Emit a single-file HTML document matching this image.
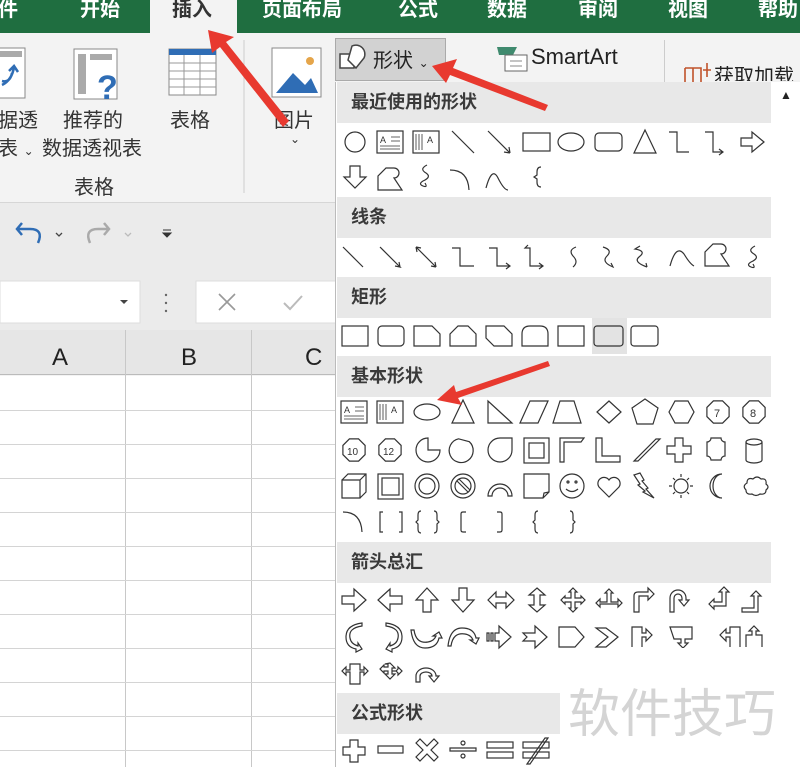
<!DOCTYPE html>
<html><head><meta charset="utf-8"><style>
*{margin:0;padding:0;box-sizing:border-box}
body{width:800px;height:767px;overflow:hidden;position:relative;background:#f3f3f3;font-family:"Liberation Sans","Noto Sans CJK SC",sans-serif}
.a{position:absolute;white-space:nowrap}
.tab{position:absolute;top:-7px;color:#fff;font-size:20px;font-weight:bold}
.rl{position:absolute;font-size:20px;color:#333;white-space:nowrap}
.hd{position:absolute;left:337px;width:434px;height:41px;background:#e8e8e8;font-size:18px;font-weight:bold;color:#3a3a3a;padding-left:14px;line-height:41px}
</style></head><body>
<div class="a" style="left:0;top:0;width:800px;height:33px;background:#1f6e40"></div>
<div class="a" style="left:150px;top:0;width:87px;height:34px;background:#f3f3f3"></div>
<div class="tab" style="left:-2px">件</div>
<div class="tab" style="left:80px">开始</div>
<div class="tab" style="left:172px;color:#333">插入</div>
<div class="tab" style="left:262px">页面布局</div>
<div class="tab" style="left:398px">公式</div>
<div class="tab" style="left:487px">数据</div>
<div class="tab" style="left:578px">审阅</div>
<div class="tab" style="left:668px">视图</div>
<div class="tab" style="left:758px">帮助</div>

<svg class="a" style="left:0;top:33px" width="340" height="170">
 <rect x="-2" y="15" width="27" height="50" fill="#fff" stroke="#888"/>
 <rect x="0" y="18" width="22" height="6" fill="#aaa"/>
 <path d="M2,52 q10,-5 12,-18 M9,38 l5,-5 l4,6 M2,48 q8,2 10,-8" stroke="#2f6db5" stroke-width="2.5" fill="none"/>
 <rect x="74" y="16" width="43" height="50" fill="#fff" stroke="#888"/>
 <rect x="78" y="21" width="8" height="40" fill="#aaa"/><rect x="90" y="21" width="22" height="6" fill="#aaa"/>
 <text x="97" y="66" font-size="34" font-weight="bold" fill="#2f6db5" font-family="Liberation Sans">?</text>
 <rect x="169" y="16" width="47" height="46" fill="#fff" stroke="#888"/>
 <rect x="169" y="16" width="47" height="6" fill="#2f6db5"/>
 <path d="M169,30H216M169,38H216M169,46H216M169,54H216M184,22V62M200,22V62" stroke="#999"/>
 <line x1="244" y1="7" x2="244" y2="160" stroke="#ccc"/>
 <rect x="272" y="15" width="49" height="49" fill="#fff" stroke="#888"/>
 <circle cx="310" cy="28" r="4" fill="#e5a54a"/>
 <path d="M276,60 L293,40 L305,52 L311,45 L318,60 Z" fill="#2f6db5"/>
</svg>
<div class="rl" style="left:-2px;top:104px">据透</div>
<div class="rl" style="left:-2px;top:132px">表 <span style="font-size:12px">⌄</span></div>
<div class="rl" style="left:63px;top:104px">推荐的</div>
<div class="rl" style="left:42px;top:132px">数据透视表</div>
<div class="rl" style="left:170px;top:104px">表格</div>
<div class="rl" style="left:74px;top:171px">表格</div>
<div class="rl" style="left:274px;top:104px">图片</div>
<div class="rl" style="left:290px;top:132px;font-size:12px">⌄</div>
<div class="a" style="left:0;top:202px;width:336px;height:1px;background:#d6d6d6"></div>

<div class="a" style="left:0;top:203px;width:336px;height:127px;background:#ebebeb"></div>
<svg class="a" style="left:0;top:203px" width="336" height="127">
 <path d="M38,40 q6,-14 -8,-14 h-12 M22,20 l-5,6 l5,6" stroke="#2f6db5" stroke-width="2.5" fill="none"/>
 <path d="M56,30 l3,3 l3,-3" stroke="#444" fill="none" stroke-width="1.3"/>
 <path d="M90,40 q-6,-14 8,-14 h10 M104,20 l5,6 l-5,6" stroke="#aaa" stroke-width="2.5" fill="none"/>
 <path d="M125,30 l3,3 l3,-3" stroke="#bbb" fill="none" stroke-width="1.3"/>
 <path d="M163,27 h8 M163,30 l4,4 l4,-4z" stroke="#333" fill="#333"/>
 <rect x="0" y="78" width="140" height="42" fill="#fff" stroke="#ddd"/>
 <path d="M120,97 l4,4 l4,-4z" fill="#444"/>
 <circle cx="166" cy="92" r="1.2" fill="#666"/><circle cx="166" cy="100" r="1.2" fill="#666"/><circle cx="166" cy="108" r="1.2" fill="#666"/>
 <rect x="196" y="78" width="142" height="42" fill="#fff" stroke="#ddd"/>
 <path d="M219,91 l16,16 M235,91 l-16,16" stroke="#999" stroke-width="1.6"/>
 <path d="M284,100 l6,6 l12,-13" stroke="#bbb" stroke-width="2" fill="none"/>
</svg>

<div class="a" style="left:0;top:330px;width:336px;height:45px;background:#e6e6e6;border-bottom:1px solid #bbb"></div>
<div class="a" style="left:52px;top:344px;font-size:24px;color:#222">A</div>
<div class="a" style="left:181px;top:344px;font-size:24px;color:#222">B</div>
<div class="a" style="left:305px;top:344px;font-size:24px;color:#222">C</div>
<svg class="a" style="left:0;top:330px" width="336" height="437">
 <rect x="0" y="46" width="336" height="391" fill="#fff"/>
 <path d="M125.5,0V437M251.5,0V437M335.5,0V437" stroke="#c8c8c8"/>
 <path d="M0,80.5H336M0,114.5H336M0,148.5H336M0,182.5H336M0,216.5H336M0,250.5H336M0,284.5H336M0,318.5H336M0,352.5H336M0,386.5H336M0,420.5H336" stroke="#d4d4d4"/>
</svg>

<div class="a" style="left:336px;top:33px;width:464px;height:50px;background:#f3f3f3"></div>
<div class="a" style="left:335px;top:38px;width:111px;height:43px;background:#d2d2d2;border:1px solid #aaa"></div>
<svg class="a" style="left:336px;top:40px" width="40" height="40"><path d="M4,14 h14 v14 h-14z" stroke="#444" fill="#fff" stroke-width="1.5"/><path d="M16,6 a9,9 0 0 1 12,12 l-8,10 l-8,-8 z" stroke="#444" fill="#fff" stroke-width="1.5"/></svg>
<div class="a" style="left:373px;top:44px;font-size:20px;color:#222">形状 <span style="font-size:12px">⌄</span></div>
<svg class="a" style="left:495px;top:45px" width="36" height="30"><path d="M2,2 h20 l-4,8 h-14z" fill="#3f8a6e"/><rect x="10" y="10" width="22" height="16" fill="#fff" stroke="#666"/><path d="M15,16h12M15,21h12" stroke="#888"/></svg>
<div class="a" style="left:531px;top:44px;font-size:22px;color:#222">SmartArt</div>
<div class="a" style="left:664px;top:40px;width:1px;height:42px;background:#ccc"></div>
<svg class="a" style="left:683px;top:60px" width="30" height="22"><path d="M2,8h16v14M2,8v14M10,8v14M20,10h8M24,3v14" stroke="#c0522b" fill="none" stroke-width="1.6"/></svg>
<div class="a" style="left:714px;top:60px;font-size:20px;color:#222;height:21px;overflow:hidden">获取加载</div>

<div class="a" style="left:335px;top:82px;width:465px;height:685px;background:#fff;border-left:1px solid #bbb"></div>
<div class="a" style="left:780px;top:88px;font-size:12px;color:#222">▲</div>
<div class="hd" style="top:82px">最近使用的形状</div>
<div class="hd" style="top:197px">线条</div>
<div class="hd" style="top:277px">矩形</div>
<div class="hd" style="top:356px">基本形状</div>
<div class="hd" style="top:542px">箭头总汇</div>
<div class="hd" style="top:693px;width:223px">公式形状</div>
<div class="a" style="left:592px;top:318px;width:35px;height:36px;background:#e3e3e3"></div>

<svg class="a" style="left:0;top:0" width="800" height="767" fill="none" stroke="#333" stroke-width="1.2" font-family="Liberation Sans">
<defs>
 <g id="tb"><rect x="-13" y="-11" width="26" height="22"/><text x="-10" y="1" font-size="9" fill="#333" stroke="none">A</text><path d="M1,-5h9M1,-1h9M-10,4h20M-10,7h20" stroke-width=".8"/></g>
 <g id="vtb"><rect x="-13" y="-11" width="26" height="22"/><path d="M-10,-8v16M-7,-8v16M-4,-8v16" stroke-width=".8"/><text x="1" y="1" font-size="9" fill="#333" stroke="none">A</text></g>
 <polygon id="oct" points="4.6,-11.1 11.1,-4.6 11.1,4.6 4.6,11.1 -4.6,11.1 -11.1,4.6 -11.1,-4.6 -4.6,-11.1"/>
</defs>
<g transform="translate(355,142)"><circle r="10"/></g>
<use href="#tb" x="390" y="142"/>
<use href="#vtb" x="426" y="142"/>
<path d="M452,131 l22,22"/>
<path d="M488,131 l22,22 M510,153 l-6,-1 M510,153 l-1,-6"/>
<rect x="523" y="133" width="27" height="18"/>
<ellipse cx="571" cy="142" rx="13" ry="9"/>
<rect x="595" y="133" width="27" height="18" rx="4"/>
<path d="M645,130 l-11,23 h22z"/>
<path d="M669,132 h8 v20 h12"/>
<path d="M705,132 h8 v20 h10 M719,149 l4,3 l-4,3"/>
<path d="M741,138 h11 v-6 l12,10 l-12,10 v-6 h-11z"/>
<path d="M350,166 h10 v11 h6 l-11,11 l-11,-11 h6z"/>
<path d="M378,190 v-14 l8,-8 h8 a5,5 0 0 1 0,10 l8,12z"/>
<path d="M427,165 q-8,4 -1,8 q6,4 -3,8 q-5,3 0,5 q5,2 2,-3"/>
<path d="M450,170 q18,0 19,20"/>
<path d="M486,188 q6,-22 12,-10 q6,12 10,12"/>
<path d="M541,167 q-4,0 -4,5 v3 l-3,2 l3,2 v3 q0,5 4,5"/>
<path d="M343,247 l20,20"/>
<path d="M380,247 l20,20 l-5,-1 M400,267 l-1,-5"/>
<path d="M416,247 l20,20 M416,247 l5,1 M416,247 l1,5 M436,267 l-5,-1 M436,267 l-1,-5"/>
<path d="M452,248 h8 v18 h14"/>
<path d="M489,248 h8 v18 h12 M506,263 l4,3 l-4,3"/>
<path d="M529,248 h-4 l3,-3 M525,248 h5 v18 h12 M539,263 l4,3 l-4,3"/>
<path d="M576,247 q-8,3 -3,9 q6,6 0,11"/>
<path d="M603,247 q10,3 4,9 q-6,6 6,11 l-2,-4"/>
<path d="M640,246 l-5,3 q12,2 4,8 q-6,5 8,10 M647,267 l-1,-4"/>
<path d="M670,266 q6,-22 14,-12 q6,10 10,12"/>
<path d="M705,266 v-14 l8,-8 h8 a5,5 0 0 1 0,10 l8,12z"/>
<path d="M755,246 q-8,4 -1,8 q6,4 -3,8 q-5,3 0,5 q5,2 2,-3"/>
<rect x="342" y="326" width="26" height="20"/>
<rect x="378" y="326" width="26" height="20" rx="4"/>
<path d="M414,326 h18 l8,8 v12 h-26z"/>
<path d="M458,326 h10 l8,8 v12 h-26 v-12z"/>
<path d="M486,326 h18 l8,8 v12 h-18 l-8,-8z"/>
<path d="M522,346 v-12 q0,-8 8,-8 h10 q8,0 8,8 v12z"/>
<path d="M558,326 h26 v20 h-26z"/>
<rect x="594" y="326" width="29" height="20" rx="3"/>
<rect x="631" y="326" width="27" height="20" rx="3"/>
<use href="#tb" x="354" y="412"/>
<use href="#vtb" x="390" y="412"/>
<ellipse cx="427" cy="412" rx="13" ry="8"/>
<path d="M463,400 l-11,23 h22z"/>
<path d="M488,401 v22 h24z"/>
<path d="M530,401 h18 l-10,22 h-18z"/>
<path d="M560,401 h14 l7,22 h-28z"/>
<path d="M609,401 l12,11 l-12,11 l-12,-11z"/>
<polygon points="645,399 658,408 653,424 637,424 632,408"/>
<polygon points="669,412 675,401 688,401 694,412 688,423 675,423"/>
<use href="#oct" x="718" y="412"/><text x="714" y="417" font-size="11" fill="#333" stroke="none">7</text>
<use href="#oct" x="754" y="412"/><text x="750" y="417" font-size="11" fill="#333" stroke="none">8</text>
<use href="#oct" x="354" y="450"/><text x="347" y="455" font-size="10" fill="#333" stroke="none">10</text>
<use href="#oct" x="390" y="450"/><text x="383" y="455" font-size="10" fill="#333" stroke="none">12</text>
<path d="M428,450 h12 a12,12 0 1 1 -12,-12z"/>
<path d="M466,440 a12,12 0 1 1 -11,1 z" transform="rotate(20 463 450)"/>
<path d="M500,438 h12 v12 a12,12 0 1 1 -12,-12z"/>
<rect x="524" y="438" width="25" height="25"/><rect x="529" y="443" width="15" height="15"/>
<path d="M560,438 h24 l-3,4 h-17 v20 h-4z"/>
<path d="M596,438 h6 v18 h18 v6 h-24z"/>
<path d="M634,461 l22,-22 h4 l-22,22z"/>
<path d="M675,438 h8 v8 h8 v8 h-8 v8 h-8 v-8 h-8 v-8 h8z"/>
<path d="M711,438 h10 a4,4 0 0 0 4,4 v14 a4,4 0 0 0 -4,4 h-10 a4,4 0 0 0 -4,-4 v-14 a4,4 0 0 0 4,-4z"/>
<path d="M746,442 v18 a8,3 0 0 0 16,0 v-18 a8,3 0 0 0 -16,0 a8,3 0 0 0 16,0"/>
<path d="M342,480 h18 v18 h-18z M342,480 l6,-6 h18 v18 l-6,6 M360,480 l6,-6"/>
<rect x="378" y="474" width="25" height="25"/><rect x="382" y="478" width="17" height="17"/>
<circle cx="427" cy="486" r="12"/><circle cx="427" cy="486" r="8"/>
<circle cx="463" cy="486" r="12"/><circle cx="463" cy="486" r="8"/><path d="M457,481 l11,11 M459,479 l11,11"/>
<path d="M488,496 a12,12 0 0 1 24,0 h-4 a8,8 0 0 0 -16,0z"/>
<path d="M524,474 h25 v18 l-6,6 h-19z M543,498 l1,-5 l5,-1"/>
<circle cx="572" cy="486" r="12"/><circle cx="568" cy="482" r="1"/><circle cx="576" cy="482" r="1"/><path d="M566,489 q6,5 12,0"/>
<path d="M609,497 l-10,-10 a6,6 0 0 1 10,-7 a6,6 0 0 1 10,7z"/>
<path d="M634,475 l6,-2 l4,7 l-2,1 l6,7 l-2,1 l8,9 l-11,-6 l2,-1 l-7,-6 l2,-1z"/>
<circle cx="681" cy="486" r="7"/><path d="M681,474v3M681,495v3M669,486h3M690,486h3M673,478l2,2M687,492l2,2M673,494l2,-2M687,480l2,-2"/>
<path d="M722,474 a12,12 0 1 0 0,24 a9,12 0 0 1 0,-24z"/>
<path d="M746,490 q-4,-4 1,-7 q0,-6 6,-4 q4,-4 8,0 q6,-1 5,5 q4,3 0,6 q0,5 -6,4 q-4,3 -8,0 q-6,1 -6,-4z"/>
<path d="M343,512 q18,0 19,20"/>
<path d="M383,512 h-3 v20 h3 M399,512 h3 v20 h-3"/>
<path d="M421,511 q-3,0 -3,4 v5 l-2,2 l2,2 v5 q0,4 3,4 M434,511 q3,0 3,4 v5 l2,2 l-2,2 v5 q0,4 -3,4"/>
<path d="M466,512 h-3 q-2,0 -2,2 v16 q0,2 2,2 h3"/>
<path d="M497,512 h3 q2,0 2,2 v16 q0,2 -2,2 h-3"/>
<path d="M538,511 q-3,0 -3,4 v5 l-2,2 l2,2 v5 q0,4 3,4"/>
<path d="M570,511 q3,0 3,4 v5 l2,2 l-2,2 v5 q0,4 -3,4"/>
<path d="M342,596 h12 v-7 l12,11 l-12,11 v-7 h-12z"/>
<path d="M402,596 h-12 v-7 l-12,11 l12,11 v-7 h12z"/>
<path d="M423,612 v-12 h-7 l11,-12 l11,12 h-7 v12z"/>
<path d="M459,588 h8 v12 h7 l-11,12 l-11,-12 h7z"/>
<path d="M488,600 l8,-8 v5 h10 v-5 l8,8 l-8,8 v-5 h-10 v5z"/>
<path d="M537,588 l8,7 h-5 v10 h5 l-8,7 l-8,-7 h5 v-10 h-5z"/>
<path d="M573,588 l4,4 h-2 v6 h6 v-2 l4,4 l-4,4 v-2 h-6 v6 h2 l-4,4 l-4,-4 h2 v-6 h-6 v2 l-4,-4 l4,-4 v2 h6 v-6 h-2z"/>
<path d="M609,589 l4,4 h-2 v9 h7 v-3 l4,4 l-4,4 v-3 h-18 v3 l-4,-4 l4,-4 v3 h7 v-9 h-2z"/>
<path d="M634,612 v-16 q0,-4 4,-4 h10 v-4 l6,6 l-6,6 v-4 h-9 v16z"/>
<path d="M670,612 v-14 a8,8 0 0 1 16,0 v2 h3 l-5,6 l-5,-6 h3 v-2 a4,4 0 0 0 -8,0 v14z"/>
<path d="M709,604 l5,-5 v3 h8 v-10 h-3 l5,-5 l5,5 h-3 v14 h-12 v3z"/>
<path d="M742,612 v-4 h12 v-12 h-3 l5,-5 l5,5 h-3 v16z"/>
<path d="M362,626 q-14,2 -12,12 q1,6 8,8 v-3 l4,6 l-6,3 v-3 q-10,-2 -10,-12 q0,-12 16,-14z"/>
<path d="M386,626 q14,2 12,12 q-1,6 -8,8 v-3 l-4,6 l6,3 v-3 q10,-2 10,-12 q0,-12 -16,-14z"/>
<path d="M414,630 q2,14 14,12 q6,-1 8,-6 h-3 l6,-4 l3,6 h-3 q-2,10 -14,10 q-12,0 -14,-18z"/>
<path d="M452,646 q2,-14 14,-12 q6,1 8,6 h-3 l6,4 l3,-6 h-3 q-2,-10 -14,-10 q-12,0 -14,18z" transform="translate(-1,0)"/>
<path d="M487,633 h2 v8 h-2z M491,633 h2 v8 h-2z M495,633 h4 v-7 l12,11 l-12,11 v-7 h-4z"/>
<path d="M523,633 h12 v-7 l12,11 l-12,11 v-7 h-12 l4,-4z"/>
<path d="M559,627 h16 l9,10 l-9,10 h-16z"/>
<path d="M596,628 h10 l12,9 l-12,10 h-10 l12,-10z"/>
<path d="M632,647 v-20 h10 v6 h4 v-4 l6,6 l-6,6 v-4 h-4 v10"/>
<path d="M670,627 h22 v12 h-7 v4 h3 l-5,5 l-5,-5 h3 v-4 h-7z"/>
<path d="M740,647 v-20 h-10 v6 h-4 v-4 l-6,6 l6,6 v-4 h4 v10"/>
<path d="M746,647 v-12 h6 v-4 h-3 l5,-5 l5,5 h-3 v4 h6 v12"/>
<path d="M350,664 h10 v6 h4 v-3 l4,4 l-4,4 v-3 h-4 v12 h-10 v-12 h-4 v3 l-4,-4 l4,-4 v3 h4z"/>
<path d="M390,663 l5,5 h-3 v3 h4 l2,-2 v-2 l4,4 l-4,4 v-2 l-2,-2 h-4 v3 h3 l-5,5 l-5,-5 h3 v-3 h-4 v2 l-4,-4 l4,-4 v2 h4 v-3 h-3z"/>
<path d="M416,682 v-6 a10,8 0 0 1 20,0 h3 l-5,6 l-5,-6 h3 a6,4 0 0 0 -12,0 v6z"/>
<path d="M350,740 h8 v7 h7 v8 h-7 v7 h-8 v-7 h-7 v-8 h7z"/>
<rect x="378" y="746" width="25" height="7"/>
<path d="M416,743 l4,-4 l7,7 l7,-7 l4,4 l-7,7 l7,7 l-4,4 l-7,-7 l-7,7 l-4,-4 l7,-7z"/>
<path d="M450,748 h26 v3 h-26z"/><circle cx="463" cy="743" r="2"/><circle cx="463" cy="756" r="2"/>
<rect x="487" y="742" width="26" height="6"/><rect x="487" y="752" width="26" height="6"/>
<rect x="523" y="742" width="26" height="6"/><rect x="523" y="752" width="26" height="6"/><path d="M527,764 l18,-26 h3 l-18,26z"/>
</svg>

<div class="a" style="left:560px;top:648px;width:240px;height:119px;background:#fff"></div>
<div class="a" style="left:568px;top:672px;font-size:52px;color:#d4d4d4;font-family:'Noto Sans CJK SC',sans-serif">软件技巧</div>

<svg class="a" style="left:0;top:0" width="800" height="767">
 <g fill="#e8392f">
  <path d="M208,30 L234,37 L226,42 L289,121 L283,127 L220,47 L212,53 Z"/>
  <path d="M432,66 L457,59 L453,68 L548,105 L545,111 L450,75 L446,83 Z"/>
  <path d="M437,400 L454,385 L456,392 L548,361 L550,366 L458,398 L462,405 Z"/>
 </g>
</svg>
</body></html>
